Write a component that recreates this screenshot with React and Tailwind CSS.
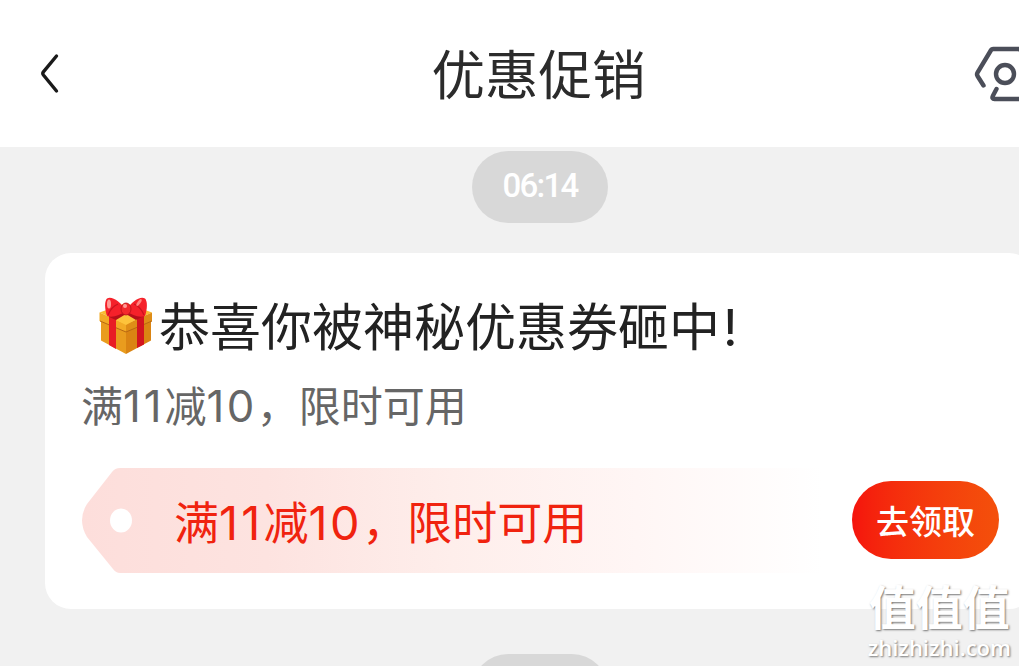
import React from 'react';

const BackIcon = () => (
  <svg width="24" height="44" viewBox="0 0 24 44" fill="none" className="shrink-0">
    <path d="M17.500 4 4.400 19.800Q3.200 21.400 4.400 23L17.500 39" stroke="#1a1a1a" strokeWidth="3.400" strokeLinecap="round" strokeLinejoin="round" />
  </svg>
);

const SettingsIcon = () => (
  <svg width="64" height="60" viewBox="0 0 64 60" fill="none" stroke="#4b4e59" strokeWidth="4.400" strokeLinecap="round" strokeLinejoin="round" className="shrink-0">
    <path d="M9.500 41.500 3.500 32Q2.500 30.300 3.500 28.600L16.500 7Q17.500 5 19.300 5H44.500Q46 5 47 7L60 29" />
    <circle cx="31" cy="30" r="9" />
    <path d="M22.500 45 18.800 52Q17.500 55 20.500 55H44.500Q46 55 47 54L60 32" />
  </svg>
);

const GiftIcon = () => (
  <svg width="56" height="60" viewBox="0 0 56 60" className="shrink-0">
    <path d="M3 20 28 30V57L3 43.500Z" fill="#e99c1e" />
    <path d="M53 20 28 30V57L53 43.500Z" fill="#da8413" />
    <path d="M1.500 15.500 28 6 54 15.500 28 27Z" fill="#f9bd32" />
    <path d="M1.500 15.500 28 27V35L1.500 24Z" fill="#f2aa25" />
    <path d="M54 15.500 28 27V35L54 24Z" fill="#de8d17" />
    <path d="M18 23 28 28 39 22 28 17Z" fill="#fdc33b" />
    <path d="M2 24 28 35 54 24" stroke="#b86812" strokeWidth="1" fill="none" />
    <path d="M11 18 18 21V52L11 48Z" fill="#e81d25" />
    <path d="M46 18 39 21V51L46 47.500Z" fill="#d3151f" />
    <path d="M9 15 28 12 47 15 46 19 38 23 28 17 18 23 11 20Z" fill="#b80f1a" />
    <path d="M28 14C22 4 14 -1 9 1.500C6 5 7 13 9 19C15 21 22 18 28 14Z" fill="#f5212a" />
    <path d="M28 14C34 4 42 -1 47 1.500C50 5 49 13 47 19C41 21 34 18 28 14Z" fill="#f5212a" />
    <path d="M20 7C15 9 12 13 10 18" stroke="#c9141e" strokeWidth="1.200" fill="none" />
    <path d="M36 7C41 9 44 13 46 18" stroke="#c9141e" strokeWidth="1.200" fill="none" />
    <ellipse cx="11" cy="7" rx="2" ry="4.500" fill="#ff9b96" />
    <ellipse cx="41" cy="5.500" rx="1.500" ry="4" transform="rotate(35 41 5.500)" fill="#ff8580" />
    <ellipse cx="28" cy="12" rx="5" ry="6" fill="#f4292d" stroke="#b80f1a" strokeWidth="0.800" />
    <ellipse cx="27" cy="9" rx="2" ry="2" fill="#ff9b96" />
  </svg>
);

const CouponShape = () => (
  <svg width="740" height="105" viewBox="0 0 740 105" className="col-start-1 row-start-1">
    <defs>
      <linearGradient id="coupon" x1="0" x2="1" y1="0" y2="0">
        <stop offset="0" stopColor="#fddedb" />
        <stop offset="0.250" stopColor="#fde3e0" />
        <stop offset="0.500" stopColor="#feeeeb" />
        <stop offset="0.750" stopColor="#fff6f5" />
        <stop offset="1" stopColor="#ffffff" />
      </linearGradient>
    </defs>
    <path d="M740 0H38Q33 0 30 4L5 36Q-5 52 5 69L31 101Q34 105 38 105H740Z" fill="url(#coupon)" />
    <ellipse cx="39" cy="52.500" rx="11" ry="12" fill="#fff" />
  </svg>
);

const TimePill = ({ children }) => (
  <div className="w-[136px] h-[72px] shrink-0 pb-[3px] rounded-full bg-[#d8d8d8] flex items-center justify-center text-white font-['Roboto',sans-serif] text-[33px] font-medium tracking-[-1.7px] leading-none">
    {children}
  </div>
);

const CouponText = () => (
  <>
    满<span className="text-[1.04em] tracking-[0.068em]">11</span>减<span className="text-[1.04em] tracking-[0.055em]">10</span>{'\uFF0C'}限时可用
  </>
);

export default function App() {
  return (
    <div lang="zh-CN" className="relative w-full h-[666px] overflow-hidden bg-[#f1f1f1] font-['Inter','Noto_Sans_CJK_SC',sans-serif]">
      <div className="w-[1080px]">
        <header className="h-[147px] bg-white flex items-center justify-between pl-[39px] pr-[42px]">
          <div className="w-16"><BackIcon /></div>
          <h1 className="pt-[5px] text-[53.500px] leading-[80px] font-normal text-[#2b2b2b]">优惠促销</h1>
          <SettingsIcon />
        </header>

        <main className="flex flex-col items-center pt-1">
          <TimePill>06:14</TimePill>

          <section className="w-[990px] h-[356px] mt-[30px] mb-[45px] bg-white rounded-[26px] pl-[37px] pr-9 pt-[38px]">
            <div className="flex items-center h-[72px] pl-4">
              <GiftIcon />
              <h2 className="ml-[5px] pt-0.5 text-[51px] leading-[72px] text-[#222] whitespace-nowrap">恭喜你被神秘优惠券砸中<span className="ml-[3px]">!</span></h2>
            </div>
            <p className="mt-[13px] -ml-px h-[60px] text-[42px] leading-[62px] text-[#666] whitespace-nowrap"><CouponText /></p>
            <div className="mt-8 flex items-start">
              <div className="grid h-[105px]">
                <CouponShape />
                <p className="col-start-1 row-start-1 pl-[92px] text-[45px] leading-[110px] text-[#f0230f] whitespace-nowrap"><CouponText /></p>
              </div>
              <button className="ml-[30px] mt-[13px] w-[147px] h-[78px] rounded-full bg-linear-to-r from-[#f5130d] to-[#f4500b] text-white text-[33px] font-medium leading-none whitespace-nowrap pt-1">去领取</button>
            </div>
          </section>

          <TimePill />
        </main>
      </div>

      <div className="absolute right-[8px] top-[583px] flex flex-col items-center text-white [text-shadow:1px_1px_2px_#777]">
        <span className="text-[47px] font-bold leading-[50px]">值值值</span>
        <span className="mt-0.5 font-['Open_Sans',sans-serif] text-[22px] font-semibold leading-[25px]">zhizhizhi.com</span>
      </div>
    </div>
  );
}
